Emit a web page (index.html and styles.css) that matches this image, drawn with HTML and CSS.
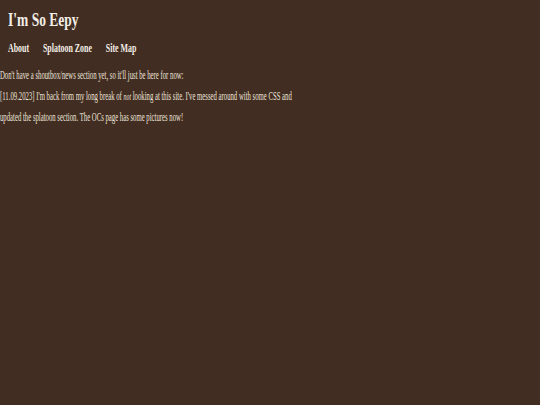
FILE: index.html
```html
<!DOCTYPE html>
<html>
<head>
<meta charset="utf-8">
<link rel="stylesheet" href="styles.css">
</head>
<body>
<div class="page">
  <h1 class="title">I'm So Eepy</h1>
  <nav class="nav">
    <a href="#">About</a>
    <a href="#">Splatoon Zone</a>
    <a href="#">Site Map</a>
  </nav>
  <div class="news">
    <p>Don't have a shoutbox/news section yet, so it'll just be here for now:</p>
    <p>[11.09.2023] I'm back from my long break of <em>not</em> looking at this site. I've messed around with some CSS and<br>updated the splatoon section. The OCs page has some pictures now!</p>
  </div>
</div>
</body>
</html>
```

FILE: styles.css
```css
html, body {
  margin: 0;
  padding: 0;
  background: #412d21;
  height: 100%;
}
body {
  color: #ece4dc;
  font-family: "Liberation Serif", "Times New Roman", serif;
  overflow: hidden;
}
.page {
  width: 540px;
}
.title {
  margin: 0;
  padding: 9px 0 0 10.7px;
  font-size: 18px;
  line-height: 22px;
  font-weight: bold;
  color: #f4eee8;
  transform: scaleX(0.75);
  transform-origin: 0 0;
  width: 700px;
}
.nav {
  display: flex;
  gap: 21px;
  padding: 10px 0 0 12px;
  font-size: 12px;
  line-height: 14px;
  font-weight: bold;
  transform: scaleX(0.66);
  transform-origin: 0 0;
  width: 800px;
}
.nav a {
  color: #f4eee8;
  text-decoration: none;
}
.news {
  padding-top: 10px;
  font-size: 11.5px;
  line-height: 21px;
  transform: scaleX(0.585);
  transform-origin: 0 0;
  width: 900px;
}
.news p {
  margin: 0;
}
.news em {
  font-size: 10px;
}
```
